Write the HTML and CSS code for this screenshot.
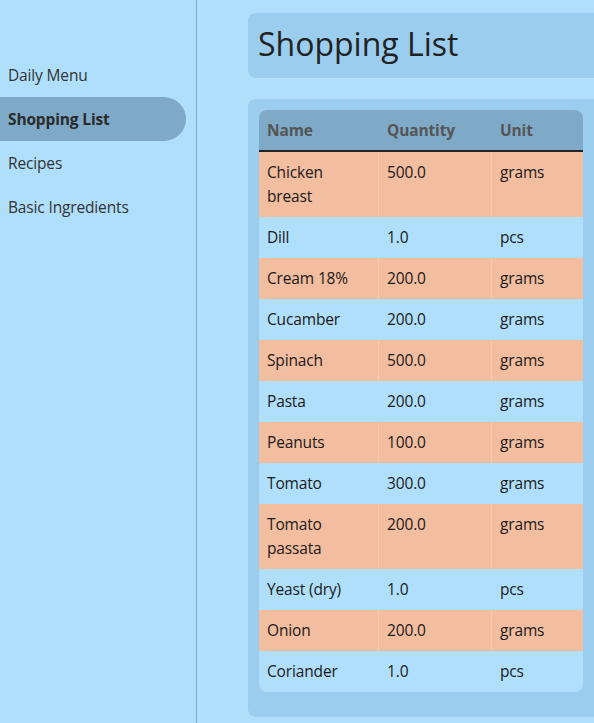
FILE: index.html
```html
<!DOCTYPE html>
<html lang="en">
<head>
<meta charset="utf-8">
<title>Shopping List</title>
<link rel="stylesheet" href="styles.css">
</head>
<body>
<div class="app">
  <nav class="sidebar">
    <a class="nav-item">Daily Menu</a>
    <a class="nav-item active">Shopping List</a>
    <a class="nav-item">Recipes</a>
    <a class="nav-item">Basic Ingredients</a>
  </nav>
  <main class="main">
    <header class="title-card">
      <h1>Shopping List</h1>
    </header>
    <section class="table-card">
      <table class="list">
        <thead>
          <tr><th class="c-name">Name</th><th class="c-qty">Quantity</th><th class="c-unit">Unit</th></tr>
        </thead>
        <tbody>
          <tr class="odd"><td>Chicken breast</td><td>500.0</td><td>grams</td></tr>
          <tr><td>Dill</td><td>1.0</td><td>pcs</td></tr>
          <tr class="odd"><td>Cream 18%</td><td>200.0</td><td>grams</td></tr>
          <tr><td>Cucamber</td><td>200.0</td><td>grams</td></tr>
          <tr class="odd"><td>Spinach</td><td>500.0</td><td>grams</td></tr>
          <tr><td>Pasta</td><td>200.0</td><td>grams</td></tr>
          <tr class="odd"><td>Peanuts</td><td>100.0</td><td>grams</td></tr>
          <tr><td>Tomato</td><td>300.0</td><td>grams</td></tr>
          <tr class="odd"><td>Tomato passata</td><td>200.0</td><td>grams</td></tr>
          <tr><td>Yeast (dry)</td><td>1.0</td><td>pcs</td></tr>
          <tr class="odd"><td>Onion</td><td>200.0</td><td>grams</td></tr>
          <tr><td>Coriander</td><td>1.0</td><td>pcs</td></tr>
        </tbody>
      </table>
    </section>
  </main>
</div>
</body>
</html>
```

FILE: styles.css
```css
* { box-sizing: border-box; }
html, body {
  margin: 0;
  padding: 0;
  height: 100%;
  overflow: hidden;
}
body {
  background: #b0dffb;
  font-family: "Open Sans", "Noto Sans", "Liberation Sans", sans-serif;
  font-size: 15.5px;
  color: #222;
}
.app {
  display: flex;
  height: 723px;
}
.sidebar {
  width: 197px;
  flex: 0 0 197px;
  border-right: 1px solid #7eaac8;
  padding-top: 53px;
  display: flex;
  flex-direction: column;
}
.nav-item {
  display: block;
  height: 44px;
  line-height: 44px;
  padding-left: 8px;
  width: 186px;
  color: #333;
  text-decoration: none;
  letter-spacing: -0.15px;
}
.nav-item.active {
  background: #7eaac8;
  border-radius: 0 22px 22px 0;
  font-weight: 700;
  color: #2a2a2a;
}
.main {
  flex: 1;
  padding: 13px 0 0 51px;
  display: flex;
  flex-direction: column;
  min-width: 0;
}
.title-card {
  background: #9bcdee;
  border-radius: 8px 0 0 8px;
  height: 65px;
  padding: 0 10px 4px 10px;
  display: flex;
  align-items: center;
}
.title-card h1 {
  margin: 0;
  font-size: 32px;
  font-weight: 500;
  color: #222;
}
.table-card {
  margin-top: 21px;
  background: #9bcdee;
  border-radius: 8px 0 0 8px;
  padding: 11px 11px 25px 11px;
}
.list {
  width: 100%;
  border-collapse: separate;
  border-spacing: 0;
  background: #b0dffb;
  border-radius: 8px;
  overflow: hidden;
  font-size: 15.5px;
  letter-spacing: -0.15px;
}
.list th {
  background: #7eaac8;
  color: #555;
  font-weight: 700;
  text-align: left;
  padding: 8px 8px 8px 8px;
  line-height: 24px;
  border-bottom: 2px solid #222;
}
.c-name { width: 119px; }
.c-qty { width: 113px; }
.list td {
  padding: 8px 8px 9px 8px;
  line-height: 24px;
  vertical-align: top;
  color: #1a1a1a;
}
.list td:first-child {
  padding-right: 16px;
}
.list td + td {
  border-left: 1px solid #b0dffb;
  padding-left: 8px;
}
.list th + th {
  padding-left: 9px;
}
.list tr.odd td {
  background: #f3bd9f;
}
.list tr.odd td + td {
  border-left-color: #f8cbb0;
}
```
